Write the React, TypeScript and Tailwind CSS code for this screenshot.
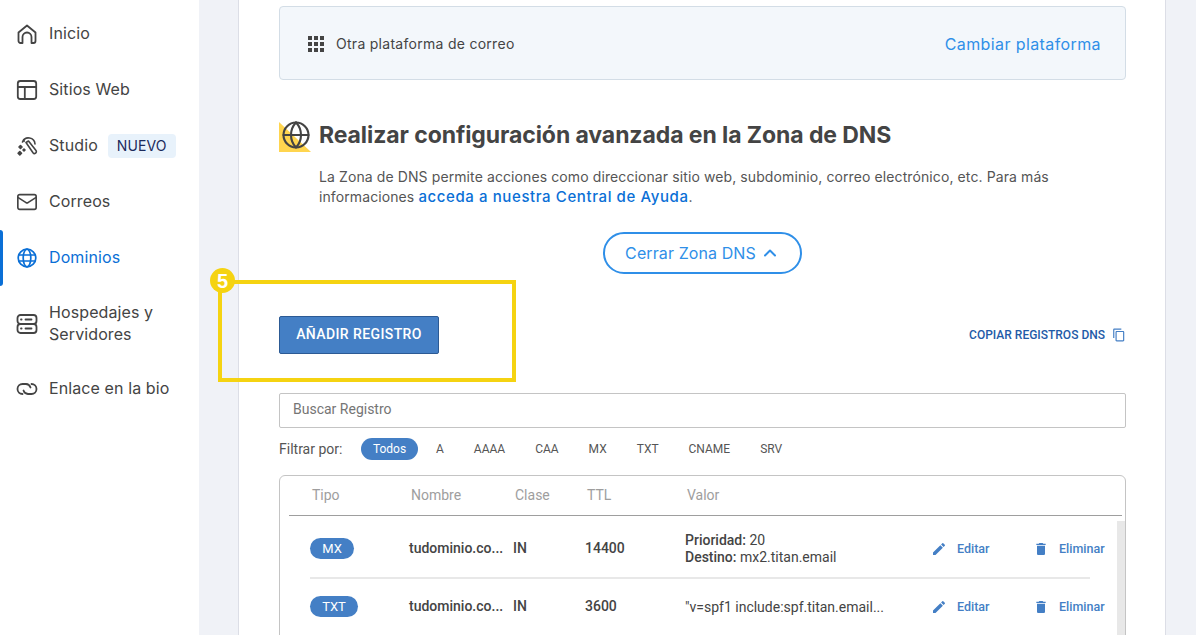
import React from 'react'
import {ChevronUp, Globe, Mail} from 'lucide-react'
import {MdApps, MdContentCopy, MdDelete, MdEdit} from 'react-icons/md'

const HomeIcon = () => (
    <svg width="22" height="22" viewBox="0 0 22 22" fill="none" stroke="currentColor" strokeWidth="1.8" strokeLinejoin="round" strokeLinecap="round">
        <path d="M2.500 9.500 11 2.500l8.500 7v8.500a2 2 0 0 1-2 2H15.500v-6a4.500 4.500 0 0 0-9 0v6H4.500a2 2 0 0 1-2-2z"/>
    </svg>
)

const LayoutIcon = () => (
    <svg width="22" height="22" viewBox="0 0 22 22" fill="none" stroke="currentColor" strokeWidth="1.8" strokeLinejoin="round">
        <rect x="1.800" y="2" width="18.400" height="18" rx="2.500"/>
        <path d="M1.800 8h18.400M8.800 8v12"/>
    </svg>
)

const StudioIcon = () => (
    <svg width="22" height="22" viewBox="0 0 22 22" fill="none" stroke="currentColor" strokeWidth="1.6" strokeLinejoin="round" strokeLinecap="round">
        <path d="M6.500 7A6.500 6.500 0 0 1 19 9"/>
        <path d="m10 7.500 2.500-1.500 7.500 9.500a1.800 1.800 0 0 1-3 2.200z"/>
        <path d="M8 4.500v2"/>
        <path d="M4.500 10.500 6 12l-1.500 1.500L3 12zM3.800 16.500l1.700 1.700-1.700 1.700-1.700-1.700z" fill="currentColor"/>
        <path d="m8 14 1 1-1 1-1-1z" fill="currentColor"/>
    </svg>
)

const ServerIcon = () => (
    <svg width="22" height="22" viewBox="0 0 22 22" fill="none" stroke="currentColor" strokeWidth="1.8" strokeLinecap="round">
        <rect x="1.500" y="2" width="19" height="9" rx="3"/>
        <rect x="1.500" y="11" width="19" height="9" rx="3"/>
        <path d="M5 6.500h.6M9.500 6.500h6M5 15.500h.6M9.500 15.500h6"/>
    </svg>
)

const LinkIcon = () => (
    <svg width="22" height="22" viewBox="0 0 22 22" fill="none" stroke="currentColor" strokeWidth="1.8" strokeLinecap="round">
        <path d="M6.500 16a5 5 0 0 1 0-10h3.500a5 5 0 0 1 4.500 3.500"/>
        <path d="M15.500 6a5 5 0 0 1 0 10H12a5 5 0 0 1-4.500-3.500"/>
    </svg>
)

const WorldIcon = () => (
    <svg width="22" height="22" viewBox="0 0 22 22" fill="none" stroke="currentColor" strokeWidth="1.7">
        <circle cx="11" cy="11" r="8.800"/>
        <ellipse cx="11" cy="11" rx="3.800" ry="8.800"/>
        <path d="M3 8h16M3 14h16"/>
    </svg>
)

const NavItem = ({icon, active, className, children}: { icon: React.ReactNode, active?: boolean, className?: string, children: React.ReactNode }) => (
    <div className={`flex items-center pl-4 gap-[11px] relative text-[16px] leading-[22px] tracking-[0.1px] ${active ? 'text-[#0a6fd6]' : 'text-[#444]'} ${className || 'h-14'}`}>
        {active && <div className="absolute left-0 top-0 bottom-0 w-[3px] bg-[#0a6fd6] rounded-r-sm"/>}
        <span className="w-[22px] h-[22px] shrink-0">{icon}</span>
        <div className="-mt-[2px] flex items-center gap-[10px]">{children}</div>
    </div>
)

const Sidebar = () => (
    <aside className="w-[199px] shrink-0 bg-white pt-[6px]">
        <NavItem icon={<HomeIcon/>}>Inicio</NavItem>
        <NavItem icon={<LayoutIcon/>}>Sitios Web</NavItem>
        <NavItem icon={<StudioIcon/>}>
            <span>Studio</span>
            <span className="translate-y-[1px] rounded bg-[#e8f2fb] text-[#1b2a5c] text-[14px] leading-6 px-[9px]">NUEVO</span>
        </NavItem>
        <NavItem icon={<Mail size={22} strokeWidth={1.8}/>}>Correos</NavItem>
        <NavItem icon={<WorldIcon/>} active>Dominios</NavItem>
        <NavItem icon={<ServerIcon/>} className="h-[75px]"><span>Hospedajes y<br/>Servidores</span></NavItem>
        <NavItem icon={<LinkIcon/>}>Enlace en la bio</NavItem>
    </aside>
)

const filters = ['A', 'AAAA', 'CAA', 'MX', 'TXT', 'CNAME', 'SRV']

const Row = ({type, ttl, badgeW, value, className}: { type: string, ttl: string, badgeW: string, value: React.ReactNode, className: string }) => (
    <div className={`flex items-center text-[14px] text-[#444] ${className}`}>
        <div className="w-[120px] pl-[21px]">
            <span className={`inline-block ${badgeW} h-[21px] leading-[21px] text-center rounded-full bg-[#447fc5] text-white text-[13px]`}>{type}</span>
        </div>
        <div className="w-[104px] font-medium">tudominio.co...</div>
        <div className="w-[72px] font-medium">IN</div>
        <div className="w-[100px] font-medium">{ttl}</div>
        <div className="w-[246px] mt-[2px] leading-[17px]">{value}</div>
        <div className="w-[102px] mt-[2px] flex items-center gap-[10px] text-[#447fc5] text-[12.5px] font-medium">
            <MdEdit size={16}/> Editar
        </div>
        <div className="mt-[2px] flex items-center gap-[10px] text-[#447fc5] text-[12.5px] font-medium">
            <MdDelete size={16}/> Eliminar
        </div>
    </div>
)

export default function App() {
    return (
        <div className="relative flex h-[635px] w-[1196px] overflow-hidden bg-[#f0f2f7]" style={{fontFamily: 'Inter, sans-serif'}}>
            <Sidebar/>
            <main className="ml-[39px] w-[928px] h-full bg-white border-l border-r border-[#dcdee6] pl-[40px] pr-[39px] pt-[6px]">
                <div className="h-[74px] flex items-center justify-between pl-6 pr-6 pt-[1px] bg-[#f3f7fb] border border-[#d3dde6] rounded">
                    <div className="flex items-center gap-2 text-[14px] tracking-[0.28px] text-[#444]">
                        <MdApps size={24} className="text-[#444]"/>
                        Otra plataforma de correo
                    </div>
                    <span className="text-[16px] text-[#2f8fe8] tracking-[0.4px]">Cambiar plataforma</span>
                </div>

                <div className="flex items-center mt-[39px] h-[32px] relative">
                    <div className="absolute left-0 top-[3px] w-[32px] h-[30px] bg-[#ffd54f] [clip-path:polygon(0_0,100%_100%,0_100%)]"/>
                    <Globe size={30} strokeWidth={1.7} className="text-[#444] relative ml-[2px]"/>
                    <h1 className="ml-[8px] text-[23px] font-bold text-[#444] tracking-[-0.08px]">Realizar configuración avanzada en la Zona de DNS</h1>
                </div>
                <p className="ml-[40px] mt-[16px] text-[14px] leading-[20px] tracking-[0.1px] text-[#555]">
                    La Zona de DNS permite acciones como direccionar sitio web, subdominio, correo electrónico, etc. Para más<br/>
                    informaciones <span className="text-[#0a6fd6] text-[15px] tracking-[0.6px] font-medium">acceda a nuestra Central de Ayuda</span>.
                </p>
                <div className="flex justify-center mt-[25px]">
                    <button className="w-[199px] h-[42px] rounded-full border-2 border-[#2f8fe8] text-[#2f8fe8] text-[16px] tracking-[0.1px] flex items-center justify-center gap-[4px]">
                        Cerrar Zona DNS <ChevronUp size={20} strokeWidth={2.4}/>
                    </button>
                </div>

                <div className="flex items-center justify-between mt-[42px]" style={{fontFamily: 'Roboto, sans-serif'}}>
                    <button className="w-[160px] h-[38px] pb-[2px] bg-[#447fc5] border border-[#2c5a94] rounded-[2px] text-white text-[14px] font-medium tracking-[0.4px]">AÑADIR REGISTRO</button>
                    <div className="flex items-center gap-[7px] text-[#1f5ba8] text-[12px] font-medium">
                        COPIAR REGISTROS DNS <MdContentCopy size={14} className="text-[#447fc5]"/>
                    </div>
                </div>

                <div style={{fontFamily: 'Roboto, sans-serif'}}>
                    <div className="mt-[39px] h-[35px] pb-[2px] border border-[#c4c4c4] rounded-[2px] pl-[13px] flex items-center text-[14px] text-[#757575]">Buscar Registro</div>
                    <div className="flex items-center h-[22px] mt-[10px] text-[14px] text-[#555]">
                        <span className="w-[82px]">Filtrar por:</span>
                        <span className="w-[57px] h-[22px] leading-[22px] text-center rounded-full bg-[#447fc5] text-white text-[12px]">Todos</span>
                        <div className="flex ml-[18px] gap-[30px] text-[12px] text-[#555]">
                            {filters.map(f => <span key={f}>{f}</span>)}
                        </div>
                    </div>
                    <div className="relative mt-[15px] h-[200px] border border-[#c4c4c4] rounded-t-md">
                        <div className="ml-[9px] mr-[3px] h-[40px] border-b border-[#9e9e9e] flex items-center text-[14px] text-[#9e9e9e]">
                            <span className="w-[122px] pl-[23px]">Tipo</span>
                            <span className="w-[104px]">Nombre</span>
                            <span className="w-[72px]">Clase</span>
                            <span className="w-[100px]">TTL</span>
                            <span>Valor</span>
                        </div>
                        <div className="absolute right-0 top-[45px] bottom-0 w-2 bg-[#e8e8e8]"/>
                        <div className="ml-[9px]">
                            <Row type="MX" ttl="14400" badgeW="w-[44px]" className="h-[61px] pt-[3px]"
                                 value={<><b className="font-medium">Prioridad:</b> 20<br/><b className="font-medium">Destino:</b> mx2.titan.email</>}/>
                            <div className="ml-[21px] w-[780px] h-[2px] bg-[#e8e8e8]"/>
                            <Row type="TXT" ttl="3600" badgeW="w-[48px]" className="h-[54px]" value={'"v=spf1 include:spf.titan.email...'}/>
                        </div>
                    </div>
                </div>
            </main>

            {/* marcador del tutorial */}
            <div className="absolute left-[218px] top-[280px] w-[298px] h-[102px] border-[4px] border-[#f5d311]"/>
            <div className="absolute left-[210px] top-[268px] w-[25px] h-[25px] rounded-full bg-[#f5d311] text-white text-[20px] font-bold flex items-center justify-center" style={{fontFamily: '"Liberation Sans", sans-serif'}}>5</div>
        </div>
    )
}
